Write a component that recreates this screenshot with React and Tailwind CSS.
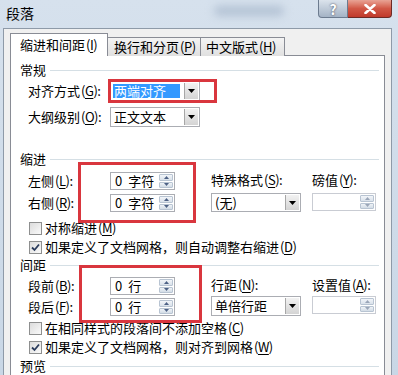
const font = { fontFamily: '"Noto Sans CJK SC", "Noto Sans", sans-serif' };

function Key({ k }) {
    return (
        <span className="ml-[1px] tracking-[-0.5px]">
            (<span className="underline underline-offset-2">{k}</span>)
        </span>
    );
}

function DropArrow() {
    return (
        <div className="w-[14px] h-full flex items-center justify-center bg-gradient-to-b from-[#f2f2f2] to-[#d4d4d4] border-l border-[#a7a7a7]">
            <svg width="7" height="4" viewBox="0 0 7 4">
                <path d="M0 0 L7 0 L3.5 4 Z" fill="#000" />
            </svg>
        </div>
    );
}

function Select({ value, selected, w = 'w-[90px]', h = 'h-[20px]' }) {
    return (
        <div className={`${w} ${h} flex border border-[#abadb3] bg-white`}>
            <div className="flex-1 flex items-center pl-[2px]">
                <span
                    className={`px-[1px] leading-[14px] ${selected ? 'bg-[#3399ff] text-white pr-[14px]' : 'text-black'}`}
                >
                    {value}
                </span>
            </div>
            <div className="p-[1px]">
                <DropArrow />
            </div>
        </div>
    );
}

function Spinner({ value, disabled, w = 'w-[65px]' }) {
    return (
        <div className={`${w} h-[18px] flex border ${disabled ? 'border-[#c9ccd3]' : 'border-[#abadb3]'} bg-white`}>
            <div className="flex-1 flex items-center pl-[4px] gap-[6px]">
                {value}
            </div>
            <div className="w-[16px] flex flex-col p-[1px] gap-[1px]">
                <div className="flex-1 flex items-center justify-center bg-gradient-to-b from-[#f2f5f9] to-[#d9e1ea] border border-[#b8c4d2] rounded-[1px]">
                    <svg width="5" height="3" viewBox="0 0 5 3">
                        <path d="M0 3 L5 3 L2.5 0 Z" fill={disabled ? '#9aa6b8' : '#4d6185'} />
                    </svg>
                </div>
                <div className="flex-1 flex items-center justify-center bg-gradient-to-b from-[#eef2f6] to-[#d3dce6] border border-[#b8c4d2] rounded-[1px]">
                    <svg width="5" height="3" viewBox="0 0 5 3">
                        <path d="M0 0 L5 0 L2.5 3 Z" fill={disabled ? '#9aa6b8' : '#4d6185'} />
                    </svg>
                </div>
            </div>
        </div>
    );
}

function Check({ checked, children, className = '' }) {
    return (
        <div className={`h-[16px] flex items-center pl-[1px] ${className}`}>
            <div className="w-[13px] h-[13px] border border-[#8e8f8f] bg-gradient-to-br from-[#dcdcdc] to-[#fafafa] flex items-center justify-center">
                {checked && (
                    <svg width="9" height="9" viewBox="0 0 9 9">
                        <path d="M1 4.5 L3.5 7 L8 1.5" stroke="#2a3b5c" strokeWidth="1.8" fill="none" />
                    </svg>
                )}
            </div>
            <span className="ml-[3px] whitespace-nowrap">{children}</span>
        </div>
    );
}

function Section({ title, className = '' }) {
    return (
        <div className={`h-[16px] flex items-center pl-[9px] pr-[5px] ${className}`}>
            <span>{title}</span>
            <div className="flex-1 ml-[4px] border-t border-[#d5dfe5]" />
        </div>
    );
}

function Label({ children }) {
    return <div className="w-[82px] whitespace-nowrap">{children}</div>;
}

export default function App() {
    return (
        <div
            className="relative w-[398px] h-[375px] overflow-hidden bg-gradient-to-b from-[#d6e1ed] to-[#c9d7e6] text-[13px] text-black"
            style={font}
        >
            {/* Title bar */}
            <div className="h-[28px] flex items-start">
                <div className="pl-[6px] pt-[5px] text-[14px] leading-[16px]">段落</div>
                <div className="ml-[180px] mt-[6px] w-[70px] h-[10px] rounded-full bg-[#b3c2d4] blur-[4px]" />
                <div className="ml-auto mr-[6px] flex">
                    <div className="w-[30px] h-[18px] rounded-bl-[4px] border border-t-0 border-[#6c7b8f] bg-gradient-to-b from-[#dbe3ec] to-[#a4b3c5] flex items-center justify-center text-white font-bold text-[14px] leading-none [text-shadow:0_0_2px_#334]">
                        ?
                    </div>
                    <div className="w-[44px] h-[18px] rounded-br-[4px] border border-t-0 border-l-0 border-[#6d2a25] bg-gradient-to-b from-[#e8a395] via-[#d15746] to-[#c0392b] flex items-center justify-center">
                        <svg width="12" height="10" viewBox="0 0 12 10">
                            <path d="M1.5 1 L10.5 9 M10.5 1 L1.5 9" stroke="#fff" strokeWidth="2.6" strokeLinecap="round" />
                        </svg>
                    </div>
                </div>
            </div>

            {/* Dialog body */}
            <div className="ml-[3px] mr-[6px] h-[347px] bg-[#f0f0f0] border-l border-t border-r border-[#8e9aa8] pl-[6px] pr-[6px] pt-[4px]">
                {/* Tabs */}
                <div className="flex items-end h-[23px] -mb-px relative z-10">
                    <div className="w-[98px] h-[23px] bg-white border border-b-0 border-[#898c95] pl-[9px] pt-[3px] leading-[16px] whitespace-nowrap">
                        缩进和间距<Key k="I" />
                    </div>
                    <div className="w-[93px] h-[19px] bg-gradient-to-b from-[#f4f4f4] to-[#e0e0e0] border border-l-0 border-b-0 border-[#898c95] pl-[6px] pt-[1px] leading-[16px] whitespace-nowrap">
                        换行和分页<Key k="P" />
                    </div>
                    <div className="w-[84px] h-[19px] bg-gradient-to-b from-[#f4f4f4] to-[#e0e0e0] border border-l-0 border-b-0 border-[#898c95] pl-[5px] pt-[1px] leading-[16px] whitespace-nowrap">
                        中文版式<Key k="H" />
                    </div>
                </div>

                {/* Panel */}
                <div className="h-[330px] bg-white border border-[#898c95] leading-[16px]">
                    <Section title="常规" className="mt-[6px]" />
                    <div className="pl-[17px]">
                        <div className="mt-[3px] flex items-center">
                            <Label>对齐方式<Key k="G" />:</Label>
                            <Select value="两端对齐" selected />
                        </div>
                        <div className="mt-[6px] flex items-center">
                            <Label>大纲级别<Key k="O" />:</Label>
                            <Select value="正文文本" />
                        </div>
                    </div>

                    <Section title="缩进" className="mt-[24px]" />
                    <div className="pl-[17px] mt-[5px] flex">
                        <div className="w-[183px] flex flex-col gap-[4px]">
                            <div className="flex items-center h-[18px]">
                                <Label>左侧<Key k="L" />:</Label>
                                <Spinner value={<><span>0</span><span>字符</span></>} />
                            </div>
                            <div className="flex items-center h-[18px]">
                                <Label>右侧<Key k="R" />:</Label>
                                <Spinner value={<><span>0</span><span>字符</span></>} />
                            </div>
                        </div>
                        <div className="w-[101px] flex flex-col gap-[5px]">
                            <div className="h-[16px] whitespace-nowrap">特殊格式<Key k="S" />:</div>
                            <Select value="(无)" h="h-[19px]" />
                        </div>
                        <div className="flex flex-col gap-[5px]">
                            <div className="h-[16px] whitespace-nowrap">磅值<Key k="Y" />:</div>
                            <Spinner disabled w="w-[64px]" />
                        </div>
                    </div>
                    <div className="pl-[17px]">
                        <Check className="mt-[8px]">对称缩进<Key k="M" /></Check>
                        <Check checked className="mt-[3px]">
                            如果定义了文档网格，则自动调整右缩进<Key k="D" />
                        </Check>
                    </div>

                    <Section title="间距" className="mt-[2px]" />
                    <div className="pl-[17px] mt-[4px] flex">
                        <div className="w-[183px] flex flex-col gap-[3px]">
                            <div className="flex items-center h-[18px]">
                                <Label>段前<Key k="B" />:</Label>
                                <Spinner value={<><span>0</span><span>行</span></>} />
                            </div>
                            <div className="flex items-center h-[18px]">
                                <Label>段后<Key k="F" />:</Label>
                                <Spinner value={<><span>0</span><span>行</span></>} />
                            </div>
                        </div>
                        <div className="w-[101px] flex flex-col gap-[3px]">
                            <div className="h-[16px] whitespace-nowrap">行距<Key k="N" />:</div>
                            <Select value="单倍行距" h="h-[20px]" />
                        </div>
                        <div className="flex flex-col gap-[3px]">
                            <div className="h-[16px] whitespace-nowrap">设置值<Key k="A" />:</div>
                            <Spinner disabled w="w-[64px]" />
                        </div>
                    </div>
                    <div className="pl-[17px]">
                        <Check className="mt-[4px]">
                            在相同样式的段落间不添加空格<Key k="C" />
                        </Check>
                        <Check checked className="mt-[3px]">
                            如果定义了文档网格，则对齐到网格<Key k="W" />
                        </Check>
                    </div>

                    <Section title="预览" className="mt-[3px]" />
                </div>
            </div>

            {/* Red annotation boxes */}
            <div className="absolute left-[108px] top-[79px] w-[109px] h-[24px] border-[3px] border-[#d9363e]" />
            <div className="absolute left-[78px] top-[162px] w-[118px] h-[61px] border-[3px] border-[#d9363e]" />
            <div className="absolute left-[79px] top-[265px] w-[123px] h-[58px] border-[3px] border-[#d9363e]" />
        </div>
    );
}
